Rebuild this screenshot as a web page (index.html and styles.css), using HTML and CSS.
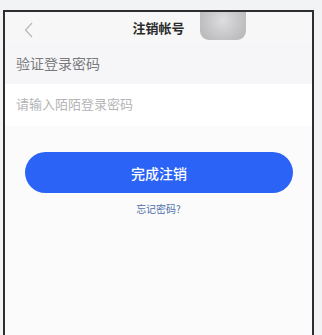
FILE: index.html
```html
<!DOCTYPE html>
<html lang="zh">
<head>
    <meta charset="UTF-8">
    <meta name="viewport" content="width=device-width, initial-scale=1.0">
    <title>注销帐号</title>
    <link rel="stylesheet" href="styles.css">
</head>
<body>

<div class="phone">
    <header>
        <span class="back">
            <svg width="9" height="16" viewBox="0 0 9 16"><path d="M8 1 L1.5 8 L8 15" fill="none" stroke="#b8b8bc" stroke-width="1.2"/></svg>
        </span>
        <span class="title">注销帐号</span>
        <div class="float-btn"></div>
    </header>

    <div class="label-row">验证登录密码</div>
    <div class="input-row">请输入陌陌登录密码</div>

    <button class="btn-submit">完成注销</button>
    <div class="forgot">忘记密码?</div>
</div>

</body>
</html>
```

FILE: styles.css
```css
body {
    font-family: "Noto Sans CJK SC", "Noto Sans", sans-serif;
    background-color: #f2f3f4;
    margin: 0;
    padding: 0;
    overflow: hidden;
}
.phone {
    position: relative;
    margin: 10px 0 0 3px;
    width: 307px;
    height: 325px;
    border: 2px solid #2e2e30;
    border-bottom: none;
    background-color: #fbfbfc;
}
header {
    position: relative;
    height: 30px;
    background-color: #f7f7f8;
    display: flex;
    align-items: center;
    justify-content: center;
}
.back {
    position: absolute;
    left: 19px;
    top: 7px;
}
.title {
    font-size: 13px;
    font-weight: 600;
    color: #2a2a2a;
}
.float-btn {
    position: absolute;
    left: 195px;
    top: 0;
    width: 46px;
    height: 28px;
    border-radius: 0 0 9px 9px;
    background: radial-gradient(circle at 50% 30%, #dedee0 0, #cacacc 45%, #b4b4b6 100%);
}
.label-row {
    height: 42px;
    line-height: 42px;
    padding-left: 11px;
    font-size: 14px;
    color: #7a7a7c;
    background-color: #f6f6f8;
}
.input-row {
    height: 42px;
    line-height: 40px;
    padding-left: 11px;
    font-size: 13px;
    color: #b4b4b6;
    background-color: #fff;
}
.btn-submit {
    display: block;
    margin: 26px 19px 0 20px;
    width: 268px;
    height: 41px;
    border: none;
    border-radius: 21px;
    background-color: #2a63f6;
    color: white;
    font-family: inherit;
    font-size: 14px;
    font-weight: 500;
}
.forgot {
    margin-top: 8px;
    text-align: center;
    font-size: 10px;
    color: #4e6fa8;
}
```
